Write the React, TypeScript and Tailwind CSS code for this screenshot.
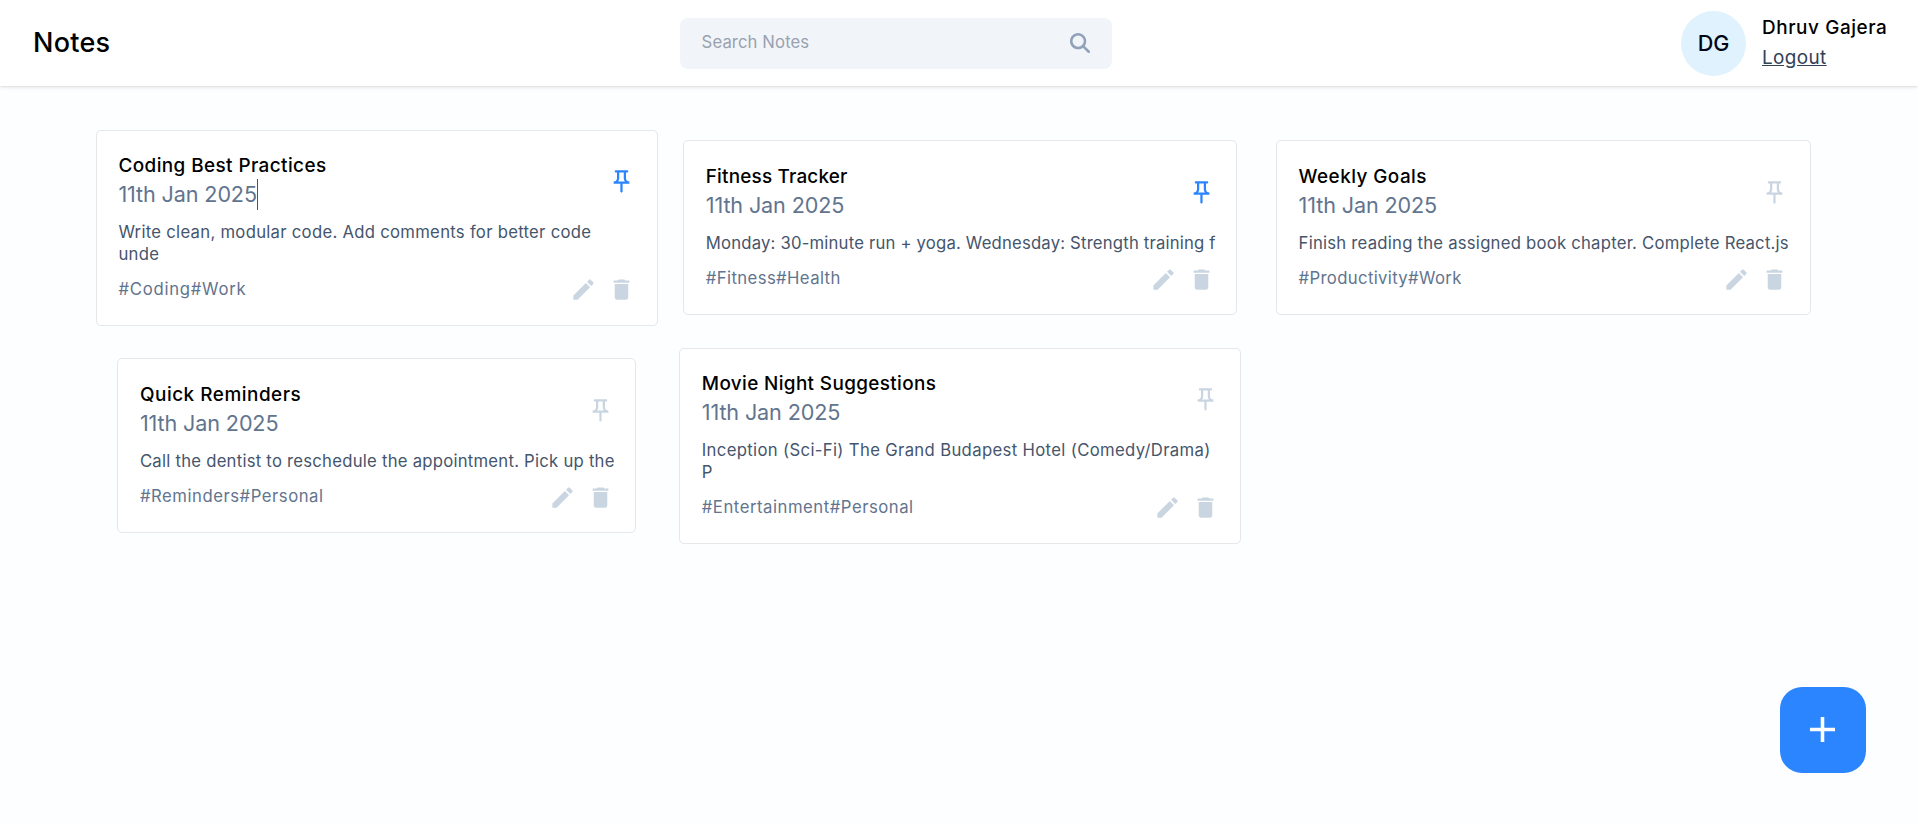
import { MdAdd, MdCreate, MdDelete, MdOutlinePushPin } from "react-icons/md";
import { FaMagnifyingGlass } from "react-icons/fa6";

type Note = {
  title: string;
  content: string;
  tags: string;
  pinned?: boolean;
  caret?: boolean;
  width: string;
  titleTracking: string;
  contentTracking: string;
  tagTracking: string;
};

const notes: Note[] = [
  { title: "Coding Best Practices", content: "Write clean, modular code. Add comments for better code\nunde", tags: "#Coding#Work", pinned: true, caret: true, width: "w-[562px]", titleTracking: "tracking-[0.42px]", contentTracking: "tracking-[0.28px]", tagTracking: "tracking-[0.75px]" },
  { title: "Fitness Tracker", content: "Monday: 30-minute run + yoga. Wednesday: Strength training f", tags: "#Fitness#Health", pinned: true, width: "w-[554px]", titleTracking: "tracking-[0.2px]", contentTracking: "tracking-[0.19px]", tagTracking: "tracking-[0.4px]" },
  { title: "Weekly Goals", content: "Finish reading the assigned book chapter. Complete React.js", tags: "#Productivity#Work", width: "w-[535px]", titleTracking: "tracking-[0.45px]", contentTracking: "tracking-[0.23px]", tagTracking: "tracking-[0.35px]" },
  { title: "Quick Reminders", content: "Call the dentist to reschedule the appointment. Pick up the", tags: "#Reminders#Personal", width: "w-[519px]", titleTracking: "tracking-[0.53px]", contentTracking: "tracking-[0.24px]", tagTracking: "tracking-[0.53px]" },
  { title: "Movie Night Suggestions", content: "Inception (Sci-Fi) The Grand Budapest Hotel (Comedy/Drama)\nP", tags: "#Entertainment#Personal", width: "w-[562px]", titleTracking: "tracking-[0.37px]", contentTracking: "tracking-[0.34px]", tagTracking: "tracking-[0.53px]" },
];

function NoteCard({ note }: { note: Note }) {
  return (
    <article className={`rounded-[5px] border border-gray-200 bg-white p-[21.6px] ${note.width}`}>
      <div className="flex items-center justify-between">
        <div>
          <h6 className={`text-[18.9px] leading-[27px] font-medium text-black ${note.titleTracking}`}>{note.title}</h6>
          <div className="-mt-px mb-px flex items-center text-[21.6px] leading-[32.4px] text-slate-500">
            <span className="tracking-[-0.13px]">11th Jan 2025</span>
            {note.caret && <span className="h-[31px] w-px bg-slate-600" />}
          </div>
        </div>
        <MdOutlinePushPin className={`size-[27px] ${note.pinned ? "text-[#2b85ff]" : "text-slate-300"}`} />
      </div>
      <p className={`mt-[10.8px] text-[16.7px] leading-[21.6px] whitespace-pre text-slate-600 ${note.contentTracking}`}>{note.content}</p>
      <div className="mt-[10.8px] flex items-center justify-between">
        <span className={`text-[16.7px] leading-[21.6px] text-slate-500 ${note.tagTracking}`}>{note.tags}</span>
        <div className="flex gap-[11px] text-slate-300">
          <MdCreate className="size-[27px]" />
          <MdDelete className="size-[27px]" />
        </div>
      </div>
    </article>
  );
}

export default function App() {
  return (
    <div className="flex h-[823px] flex-col overflow-hidden bg-[#fdfeff] font-['Inter','Noto_Sans',sans-serif]">
      <header className="relative flex h-[86px] shrink-0 items-center justify-between bg-white pr-[31px] pl-[33px] shadow-[0_1.35px_4px_rgba(0,0,0,0.12),0_1.35px_2.7px_rgba(0,0,0,0.08)]">
        <h2 className="w-[647px] text-[27px] leading-[38px] font-medium tracking-[0.25px] text-black">Notes</h2>
        <div className="flex h-[51px] w-[432px] items-center justify-between rounded-[8px] bg-slate-100 pr-[22px] pb-px pl-[21.6px]">
          <span className="text-[16.7px] tracking-[0.1px] text-gray-400">Search Notes</span>
          <FaMagnifyingGlass className="size-[20px] text-slate-400" />
        </div>
        <div className="flex w-[775px] items-center justify-end gap-[16px]">
          <div className="flex size-[65px] items-center justify-center rounded-full bg-[#dff2fe] text-[21.6px] font-medium text-slate-950">DG</div>
          <div className="w-[125px] pt-[2px] text-[18.9px]">
            <p className="leading-[27px] font-medium tracking-[0.6px] whitespace-nowrap text-black">Dhruv Gajera</p>
            <button className="block pt-px leading-[32px] tracking-[0.4px] text-slate-700 underline">Logout</button>
          </div>
        </div>
      </header>
      <main className="mt-[43.6px] ml-[85.2px] grid w-[1750px] grid-cols-3 items-center justify-items-center gap-y-[21.6px]">
        {notes.map((note) => (
          <NoteCard key={note.title} note={note} />
        ))}
      </main>
      <button className="absolute top-[687px] left-[1780px] flex size-[86px] items-center justify-center rounded-[22px] bg-[#2b85ff] pr-px pb-[2px] text-white">
        <MdAdd className="size-[43px]" />
      </button>
    </div>
  );
}
